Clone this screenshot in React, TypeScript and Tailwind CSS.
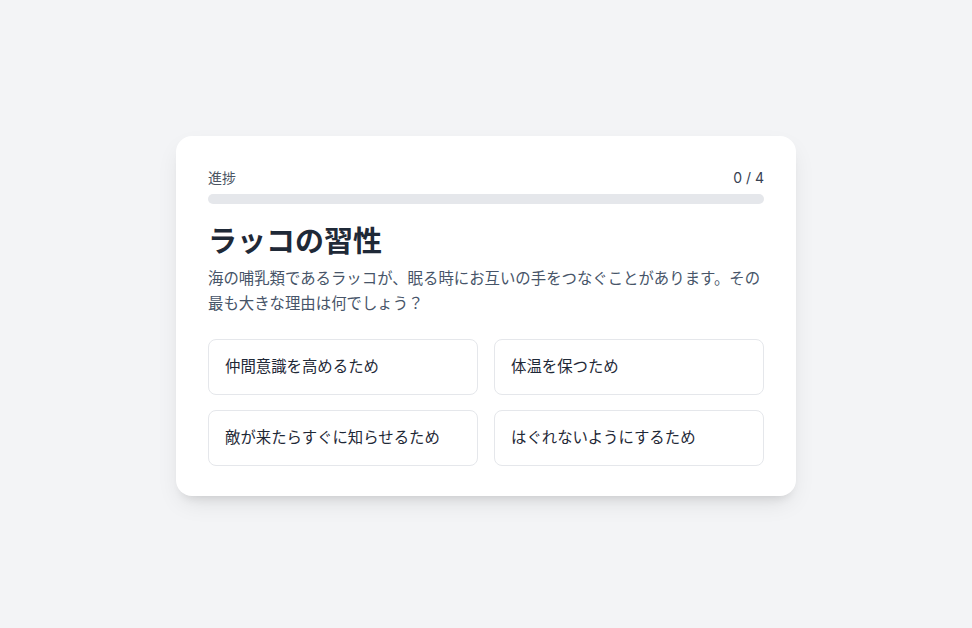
import React from "react";

const options = [
  "仲間意識を高めるため",
  "体温を保つため",
  "敵が来たらすぐに知らせるため",
  "はぐれないようにするため",
];

export default function App() {
  return (
    <div
      className="min-h-screen w-full bg-[#f3f4f6] flex items-center justify-center"
      style={{ fontFamily: '"Inter", "Noto Sans CJK JP", "Noto Sans", sans-serif' }}
    >
      <div className="w-[620px] bg-white rounded-2xl shadow-[0_10px_25px_-5px_rgba(0,0,0,0.1),0_8px_10px_-6px_rgba(0,0,0,0.1)] px-8 pt-8 pb-[30px] mt-[3px]">
        <div className="flex items-center justify-between text-sm leading-5 mb-1.5">
          <span className="text-[#4b5563]">進捗</span>
          <span className="text-[#374151]">0 / 4</span>
        </div>
        <div className="h-2.5 w-full rounded-full bg-[#e5e7eb]" />
        <h1 className="mt-5 text-[29px] leading-[36px] font-bold text-[#1f2937]">ラッコの習性</h1>
        <p className="mt-1.5 text-[15.4px] leading-[25px] text-[#475569]">
          海の哺乳類であるラッコが、眠る時にお互いの手をつなぐことがあります。その最も大きな理由は何でしょう？
        </p>
        <div className="mt-[23px] grid grid-cols-2 gap-x-4 gap-y-[15px]">
          {options.map((o) => (
            <button
              key={o}
              className="text-left bg-white border border-[#e5e7eb] rounded-lg px-4 py-4 text-[15.4px] leading-[22px] text-[#1f2937]"
            >
              {o}
            </button>
          ))}
        </div>
      </div>
    </div>
  );
}
